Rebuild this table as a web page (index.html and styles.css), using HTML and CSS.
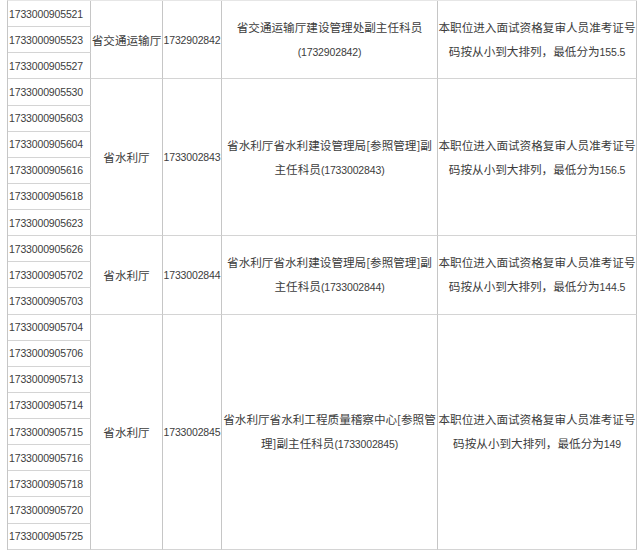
FILE: index.html
```html
<!DOCTYPE html>
<html lang="zh-CN">
<head>
<meta charset="utf-8">
<title>面试资格复审名单</title>
<link rel="stylesheet" href="styles.css">
</head>
<body>
<table class="list">
  <colgroup>
    <col class="c-id">
    <col class="c-dept">
    <col class="c-code">
    <col class="c-post">
    <col class="c-note">
  </colgroup>
  <tbody>
    <tr>
      <td class="id">1733000905521</td>
      <td class="dept" rowspan="3">省交通运输厅</td>
      <td class="code" rowspan="3">1732902842</td>
      <td class="post" rowspan="3">省交通运输厅建设管理处副主任科员<br><span class="n">(1732902842)</span></td>
      <td class="note" rowspan="3">本职位进入面试资格复审人员准考证号<br>码按从小到大排列，最低分为<span class="n">155.5</span></td>
    </tr>
    <tr><td class="id">1733000905523</td></tr>
    <tr><td class="id">1733000905527</td></tr>

    <tr>
      <td class="id">1733000905530</td>
      <td class="dept" rowspan="6">省水利厅</td>
      <td class="code" rowspan="6">1733002843</td>
      <td class="post" rowspan="6">省水利厅省水利建设管理局[参照管理]副<br>主任科员<span class="n">(1733002843)</span></td>
      <td class="note" rowspan="6">本职位进入面试资格复审人员准考证号<br>码按从小到大排列，最低分为<span class="n">156.5</span></td>
    </tr>
    <tr><td class="id">1733000905603</td></tr>
    <tr><td class="id">1733000905604</td></tr>
    <tr><td class="id">1733000905616</td></tr>
    <tr><td class="id">1733000905618</td></tr>
    <tr><td class="id">1733000905623</td></tr>

    <tr>
      <td class="id">1733000905626</td>
      <td class="dept" rowspan="3">省水利厅</td>
      <td class="code" rowspan="3">1733002844</td>
      <td class="post" rowspan="3">省水利厅省水利建设管理局[参照管理]副<br>主任科员<span class="n">(1733002844)</span></td>
      <td class="note" rowspan="3">本职位进入面试资格复审人员准考证号<br>码按从小到大排列，最低分为<span class="n">144.5</span></td>
    </tr>
    <tr><td class="id">1733000905702</td></tr>
    <tr><td class="id">1733000905703</td></tr>

    <tr>
      <td class="id">1733000905704</td>
      <td class="dept" rowspan="9">省水利厅</td>
      <td class="code" rowspan="9">1733002845</td>
      <td class="post" rowspan="9">省水利厅省水利工程质量稽察中心[参照管<br>理]副主任科员<span class="n">(1733002845)</span></td>
      <td class="note" rowspan="9">本职位进入面试资格复审人员准考证号<br>码按从小到大排列，最低分为<span class="n">149</span></td>
    </tr>
    <tr><td class="id">1733000905706</td></tr>
    <tr><td class="id">1733000905713</td></tr>
    <tr><td class="id">1733000905714</td></tr>
    <tr><td class="id">1733000905715</td></tr>
    <tr><td class="id">1733000905716</td></tr>
    <tr><td class="id">1733000905718</td></tr>
    <tr><td class="id">1733000905720</td></tr>
    <tr><td class="id">1733000905725</td></tr>
  </tbody>
</table>
</body>
</html>
```

FILE: styles.css
```css
html, body {
  margin: 0;
  padding: 0;
  background: #ffffff;
}

body {
  padding-left: 7px;
  font-family: "Noto Sans CJK SC", "Liberation Sans", sans-serif;
  font-size: 11.6px;
  color: #3c3c3c;
}

.list {
  width: 630px;
  table-layout: fixed;
  border-collapse: separate;
  border-spacing: 0;
  border-left: 1px solid #c6c6c6;
  border-top: 1px solid #e6e6e6;
}

.c-id { width: 83px; }
.c-dept { width: 72px; }
.c-code { width: 59px; }
.c-post { width: 216px; }
.c-note { width: 199px; }

.list tr {
  height: 26.14px;
}

.list td {
  padding: 0;
  border-right: 1px solid #c6c6c6;
  border-bottom: 1px solid #d4d4d4;
  vertical-align: middle;
  line-height: 24px;
  white-space: nowrap;
  overflow: hidden;
}

.id,
.code,
.n {
  font-family: "Liberation Sans", "DejaVu Sans", sans-serif;
  font-size: 10.5px;
  letter-spacing: -0.15px;
}

.list td.id {
  padding-left: 1px;
  text-align: left;
}

.dept,
.code,
.post,
.note {
  text-align: center;
}
```
